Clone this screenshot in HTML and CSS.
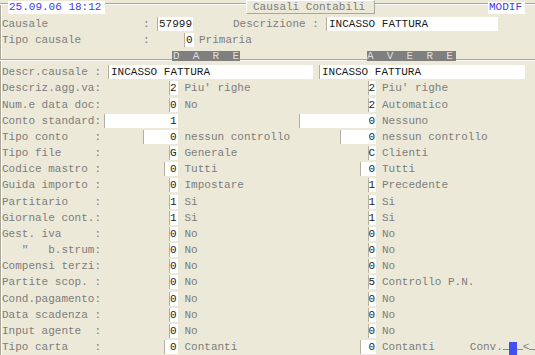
FILE: index.html
```html
<!DOCTYPE html>
<html lang="it">
<head>
    <meta charset="UTF-8">
    <title>Causali Contabili</title>
    <link rel="stylesheet" href="styles.css">
</head>
<body>
<div id="screen">
    <div class="top">
        <div class="clock">25.09.06 18:12</div>
        <div class="tab">Causali Contabili</div>
        <div class="mode">MODIF</div>
    </div>

    <div class="head">
        <span class="hl">Causale</span><span class="hc">:</span><span class="in cod">57999</span><span class="hd">Descrizione :</span><span class="in desc">INCASSO FATTURA</span>
    </div>
    <div class="head">
        <span class="hl">Tipo causale</span><span class="hc">:</span><span class="in tipo">0</span><span class="hp">Primaria</span>
    </div>
    <div class="sect">
        <span class="bar dare">D  A  R  E</span><span class="bar avere">A  V  E  R  E</span>
    </div>
    <div class="drow">
        <span class="dl">Descr.causale :</span><span class="in dd">INCASSO FATTURA</span><span class="in da">INCASSO FATTURA</span>
    </div>

    <div class="row">
        <div class="fa"><span>Descriz.agg.va:</span><span class="in n">2</span></div>
        <div class="fb"><span>Piu' righe</span><span class="in n">2</span></div>
        <div class="fc">Piu' righe</div>
    </div>
    <div class="row">
        <div class="fa"><span>Num.e data doc:</span><span class="in n">0</span></div>
        <div class="fb"><span>No</span><span class="in n">2</span></div>
        <div class="fc">Automatico</div>
    </div>
    <div class="row">
        <div class="fa"><span>Conto standard:</span><span class="in n w3">1</span></div>
        <div class="fb"><span></span><span class="in n w3r">0</span></div>
        <div class="fc">Nessuno</div>
    </div>
    <div class="row">
        <div class="fa"><span>Tipo conto    :</span><span class="in n w2">0</span></div>
        <div class="fb"><span>nessun controllo</span><span class="in n w2r">0</span></div>
        <div class="fc">nessun controllo</div>
    </div>
    <div class="row">
        <div class="fa"><span>Tipo file     :</span><span class="in n">G</span></div>
        <div class="fb"><span>Generale</span><span class="in n">C</span></div>
        <div class="fc">Clienti</div>
    </div>
    <div class="row">
        <div class="fa"><span>Codice mastro :</span><span class="in n w1">0</span></div>
        <div class="fb"><span>Tutti</span><span class="in n w1r">0</span></div>
        <div class="fc">Tutti</div>
    </div>
    <div class="row">
        <div class="fa"><span>Guida importo :</span><span class="in n">0</span></div>
        <div class="fb"><span>Impostare</span><span class="in n">1</span></div>
        <div class="fc">Precedente</div>
    </div>
    <div class="row">
        <div class="fa"><span>Partitario    :</span><span class="in n">1</span></div>
        <div class="fb"><span>Si</span><span class="in n">1</span></div>
        <div class="fc">Si</div>
    </div>
    <div class="row">
        <div class="fa"><span>Giornale cont.:</span><span class="in n">1</span></div>
        <div class="fb"><span>Si</span><span class="in n">1</span></div>
        <div class="fc">Si</div>
    </div>
    <div class="row">
        <div class="fa"><span>Gest. iva     :</span><span class="in n">0</span></div>
        <div class="fb"><span>No</span><span class="in n">0</span></div>
        <div class="fc">No</div>
    </div>
    <div class="row">
        <div class="fa"><span>   "   b.strum:</span><span class="in n">0</span></div>
        <div class="fb"><span>No</span><span class="in n">0</span></div>
        <div class="fc">No</div>
    </div>
    <div class="row">
        <div class="fa"><span>Compensi terzi:</span><span class="in n">0</span></div>
        <div class="fb"><span>No</span><span class="in n">0</span></div>
        <div class="fc">No</div>
    </div>
    <div class="row">
        <div class="fa"><span>Partite scop. :</span><span class="in n">0</span></div>
        <div class="fb"><span>No</span><span class="in n">5</span></div>
        <div class="fc">Controllo P.N.</div>
    </div>
    <div class="row">
        <div class="fa"><span>Cond.pagamento:</span><span class="in n">0</span></div>
        <div class="fb"><span>No</span><span class="in n">0</span></div>
        <div class="fc">No</div>
    </div>
    <div class="row">
        <div class="fa"><span>Data scadenza :</span><span class="in n">0</span></div>
        <div class="fb"><span>No</span><span class="in n">0</span></div>
        <div class="fc">No</div>
    </div>
    <div class="row">
        <div class="fa"><span>Input agente  :</span><span class="in n">0</span></div>
        <div class="fb"><span>No</span><span class="in n">0</span></div>
        <div class="fc">No</div>
    </div>
    <div class="row">
        <div class="fa"><span>Tipo carta    :</span><span class="in n w1">0</span></div>
        <div class="fb"><span>Contanti</span><span class="in n w1r">0</span></div>
        <div class="fc"><span>Contanti</span><span class="conv">Conv.</span><span class="ln"></span><span class="cur"></span><span class="ln"></span><span>&lt;</span><span class="ln"></span></div>
    </div>
</div>
</body>
</html>
```

FILE: styles.css
```css
*{
    margin: 0;
    padding: 0;
    box-sizing: border-box;
}
body{
    width: 535px;
    height: 355px;
    overflow: hidden;
    background: #ece9d8;
    font: 11px "Liberation Mono", "Courier New", monospace;
    color: #7d7d7d;
}
/* cornice: riga in alto e a sinistra */
#screen{
    height: 355px;
    background:
        linear-gradient(#a9a799, #a9a799) 0 3px / 100% 1px no-repeat,
        linear-gradient(#fff, #fff) 0 4px / 100% 1px no-repeat,
        linear-gradient(#a9a799, #a9a799) 0 3px / 1px 100% no-repeat,
        linear-gradient(#fff, #fff) 1px 4px / 1px 100% no-repeat;
}
.top{
    display: flex;
    height: 15.6px;
    padding-left: 8px;
}
.clock{
    margin-top: 1px;
    width: 97px;
    height: 12.5px;
    line-height: 12.5px;
    padding-left: 1px;
    background: #fff;
    color: #3b3bf2;
}
.tab{
    margin-left: 141px;
    width: 129px;
    height: 14px;
    line-height: 12px;
    padding-left: 6px;
    background: #ece9d8;
    border: 1px solid #a9a799;
    border-top-color: #fff;
    border-left-color: #fff;
}
.mode{
    margin-left: 113px;
    margin-top: 2px;
    width: 37px;
    height: 11.5px;
    line-height: 11.5px;
    padding-left: 1px;
    background: #fff;
    color: #3b3bf2;
}

.in{
    background: #fff;
    color: #1a1a1a;
    height: 14px;
    line-height: 14px;
    border-left: 1px solid #b3b0a1;
    white-space: pre;
}

.head, .drow, .sect{
    display: flex;
    align-items: center;
    height: 16.18px;
    white-space: pre;
}
.hl{
    width: 143px;
    padding-left: 2px;
}
.hc{
    width: 14px;
}
.cod{
    width: 36px;
    padding-left: 1px;
}
.hd{
    margin-left: 40px;
    width: 93px;
}
.desc{
    width: 172px;
    padding-left: 2px;
}
.tipo{
    margin-left: 27px;
    width: 9.5px;
    text-align: right;
    padding-right: 1px;
}
.hp{
    margin-left: 5.5px;
}

.sect{
    background:
        linear-gradient(#a9a799, #a9a799) 0 11px / 100% 1px no-repeat,
        linear-gradient(#fff, #fff) 0 12px / 100% 1px no-repeat;
}
.bar{
    height: 10.7px;
    line-height: 10.7px;
    background: #7f7f7f;
    color: #dedede;
    overflow: hidden;
}
.dare{
    margin-left: 172px;
    width: 68px;
    padding-left: 1px;
}
.avere{
    margin-left: 127px;
    width: 89px;
}

.dl{
    width: 108px;
    padding-left: 2px;
}
.dd{
    width: 205px;
    padding-left: 2px;
}
.da{
    margin-left: 6px;
    width: 206px;
    padding-left: 2px;
}

.row{
    display: grid;
    grid-template-columns: 177.5px 198.5px 1fr;
    height: 16.18px;
    align-items: center;
    white-space: pre;
}
.fa, .fb{
    display: flex;
    align-items: center;
    justify-content: space-between;
}
.fa{
    padding-left: 2px;
}
.fb{
    padding-left: 7px;
}
.fc{
    display: flex;
    align-items: center;
    height: 16.18px;
    padding-left: 6px;
}
.n{
    width: 8.5px;
    text-align: right;
    padding-right: 1px;
}
.w1{ width: 13.5px; }
.w2{ width: 34.5px; }
.w3{ width: 73.5px; }
.w1r{ width: 16px; }
.w2r{ width: 36px; }
.w3r{ width: 77px; }

.conv{
    margin-left: 35px;
}
.ln{
    width: 6px;
    height: 1px;
    margin-top: 4px;
    background: #8a8a8a;
}
.cur{
    align-self: flex-end;
    width: 8px;
    height: 13px;
    background: #4150f0;
}
```
